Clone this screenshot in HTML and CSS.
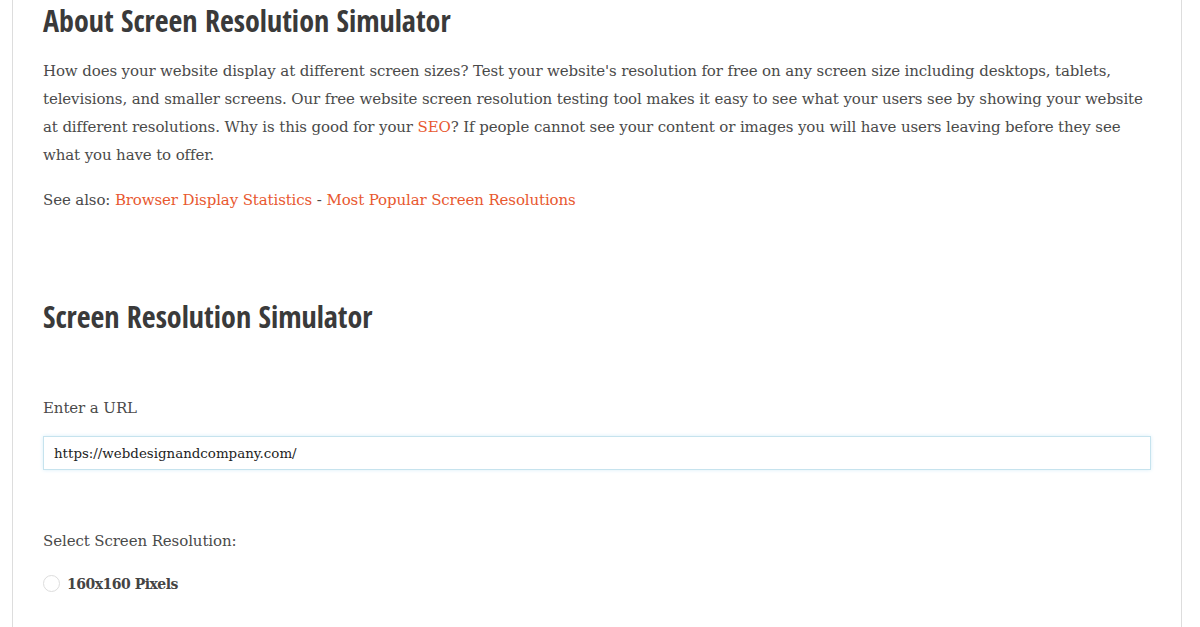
FILE: index.html
```html
<!DOCTYPE html>
<html>
<head>
<meta charset="utf-8">
<link rel="stylesheet" href="styles.css">
</head>
<body>
<div class="page">
  <div class="box">
    <h2 class="title">About Screen Resolution Simulator</h2>
    <p class="text">How does your website display at different screen sizes? Test your website's resolution for free on any screen size including desktops, tablets, televisions, and smaller screens. Our free website screen resolution testing tool makes it easy to see what your users see by showing your website at different resolutions. Why is this good for your <a href="#">SEO</a>? If people cannot see your content or images you will have users leaving before they see what you have to offer.</p>
    <p class="text see">See also: <a href="#">Browser Display Statistics</a> - <a href="#">Most Popular Screen Resolutions</a></p>
    <h2 class="title second">Screen Resolution Simulator</h2>
    <label class="label">Enter a URL</label>
    <input class="url" type="text" value="https://webdesignandcompany.com/">
    <div class="label select">Select Screen Resolution:</div>
    <div class="option"><span class="radio"></span><span class="opt-text">160x160 Pixels</span></div>
  </div>
</div>
</body>
</html>
```
FILE: styles.css
```css
html, body { margin: 0; padding: 0; background: #fff; }
body { font-family: "Roboto Slab", "DejaVu Serif", serif; color: #444; }
.page { padding: 0 18px 0 12px; height: 627px; overflow: hidden; }
.box { border-left: 1px solid #ddd; border-right: 1px solid #ddd; padding: 0 30px; height: 700px; }
.title { font-family: "Open Sans Condensed", "Liberation Sans Narrow", "Open Sans", sans-serif; font-weight: 700; font-size: 30px; color: #3a3a3a; margin: 0; padding-top: 2px; line-height: 38px; letter-spacing: 0; }
.text { font-size: 15px; font-weight: 300; line-height: 28px; margin: 17px 0 0; color: #4a4a4a; letter-spacing: -0.12px; }
.text a { color: #e8582f; text-decoration: none; }
.see { margin-top: 17px; }
.second { margin-top: 82px; }
.label { display: block; font-size: 15px; color: #4a4a4a; margin-top: 60px; line-height: 24px; letter-spacing: -0.1px; }
.url { display: block; box-sizing: border-box; width: 1108px; height: 34px; margin-top: 16px; border: 1px solid #c6e3ee; box-shadow: 0 0 4px #d8eef8; padding: 0 10px; font-family: "Roboto Slab", "DejaVu Serif", serif; font-size: 13.4px; color: #222; outline: none; }
.select { margin-top: 59px; }
.option { display: flex; align-items: center; margin-top: 22px; gap: 7px; }
.radio { width: 17px; height: 17px; border: 1px solid #ddd; border-radius: 50%; box-sizing: border-box; }
.opt-text { font-size: 14px; font-weight: 700; color: #444; letter-spacing: -0.5px; }
```
